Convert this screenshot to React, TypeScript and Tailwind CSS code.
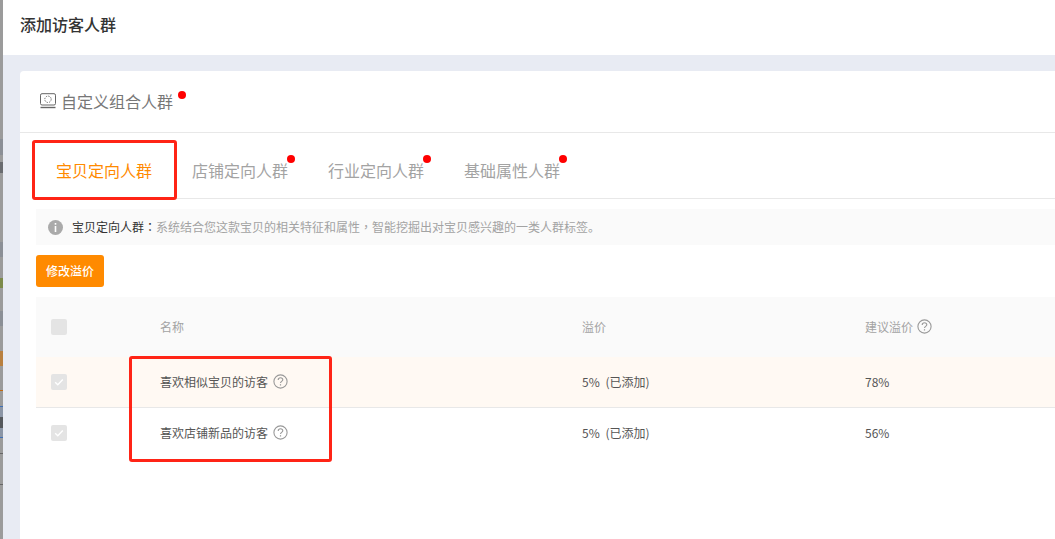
import React from 'react';

const font = { fontFamily: '"Noto Sans CJK SC", "Liberation Sans", sans-serif' };

const HelpIcon: React.FC = () => (
  <svg width="15" height="15" viewBox="0 0 15 15" fill="none" className="shrink-0">
    <circle cx="7.5" cy="7.5" r="6.6" stroke="#999999" strokeWidth="1.1" />
    <path d="M5.2 5.9c0-1.3 1-2.2 2.3-2.2s2.3.9 2.3 2.1c0 1.6-2.3 1.6-2.3 3.3" stroke="#999999" strokeWidth="1.1" />
    <rect x="6.9" y="10.2" width="1.2" height="1.3" fill="#999999" />
  </svg>
);

const Dot: React.FC<{ className: string }> = ({ className }) => (
  <span className={`absolute h-2 w-2 rounded-full bg-[#ff0000] ${className}`} />
);

const Check: React.FC<{ checked?: boolean }> = ({ checked }) => (
  <span className="flex h-4 w-4 items-center justify-center rounded-[2px] bg-[#e4e4e4]">
    {checked && (
      <svg width="12" height="12" viewBox="0 0 12 12" fill="none">
        <path d="M2.2 6.2l2.6 2.6 5-5.4" stroke="#ffffff" strokeWidth="1.4" />
      </svg>
    )}
  </span>
);

const tabs = [
  { label: '宝贝定向人群', active: true },
  { label: '店铺定向人群' },
  { label: '行业定向人群' },
  { label: '基础属性人群' },
];

const rows = [
  { name: '喜欢相似宝贝的访客', advice: '78%', bg: 'bg-[#fff9f3]' },
  { name: '喜欢店铺新品的访客', advice: '56%', bg: 'bg-white' },
];

// strip of the page that shows behind the drawer
const LeftStrip: React.FC = () => (
  <div className="flex w-[3px] shrink-0 flex-col bg-[#9b9b9b]">
    <div className="h-[139px] shrink-0" />
    <div className="h-4 shrink-0 bg-[#8b8f96]" />
    <div className="h-[7px] shrink-0" />
    <div className="h-[11px] shrink-0 bg-[#6a6c70]" />
    <div className="h-[69px] shrink-0" />
    <div className="h-[15px] shrink-0 bg-[#8b8f96]" />
    <div className="h-[21px] shrink-0" />
    <div className="h-[10px] shrink-0 bg-[#7c8a4a]" />
    <div className="h-[23px] shrink-0" />
    <div className="h-[15px] shrink-0 bg-[#8b8f96]" />
    <div className="h-[25px] shrink-0" />
    <div className="h-[15px] shrink-0 bg-[#b9803f]" />
    <div className="h-[24px] shrink-0" />
    <div className="h-px shrink-0 bg-[#c2690f]" />
    <div className="h-[15px] shrink-0" />
    <div className="h-px shrink-0 bg-[#3f6fb5]" />
    <div className="h-[10px] shrink-0 bg-[#8b95a5]" />
    <div className="h-[11px] shrink-0 bg-[#55585c]" />
    <div className="h-[9px] shrink-0 bg-[#8b95a5]" />
    <div className="h-px shrink-0 bg-[#3f6fb5]" />
    <div className="h-[15px] shrink-0" />
    <div className="h-px shrink-0 bg-[#666666]" />
    <div className="h-[30px] shrink-0" />
    <div className="h-px shrink-0 bg-[#666666]" />
  </div>
);

export default function App() {
  return (
    <div className="relative flex h-[539px] w-[1055px] overflow-hidden bg-white" style={font}>
      <LeftStrip />
      <div className="flex min-w-0 flex-1 flex-col">
        <div className="flex h-[55px] shrink-0 items-center pl-[17px] pb-[8px] text-[16px] font-medium text-[#333333]">
          添加访客人群
        </div>
        <div className="flex-1 bg-[#e8ebf3] pt-4 pl-[17px]">
          <div className="h-full w-[1100px] rounded-t-[4px] bg-white">
            <div className="flex h-[62px] items-center gap-[5px] border-b border-[#e8e8e8] pb-px pl-5">
              <svg width="16" height="16" viewBox="0 0 16 16" fill="none">
                <rect x="0.5" y="0.7" width="15" height="11.3" rx="1.5" stroke="#666666" />
                <circle cx="8" cy="6.3" r="3.2" stroke="#666666" strokeDasharray="1.3 1.2" />
                <path d="M0.5 14.5h15" stroke="#666666" strokeWidth="1.4" />
              </svg>
              <span className="relative text-[16px] leading-6 text-[#777777]">
                自定义组合人群
                <Dot className="left-[117px] top-[2px]" />
              </span>
            </div>
            <div className="ml-4 flex h-[66px] items-center border-b border-[#e8e8e8] pt-[8px]">
              {tabs.map((tab) => (
                <div
                  key={tab.label}
                  className={`relative w-[136px] px-5 text-[16px] leading-6 ${tab.active ? 'text-[#ff8a00]' : 'text-[#a3a3a3]'}`}
                >
                  {tab.label}
                  {!tab.active && <Dot className="left-[115px] top-[-3px]" />}
                </div>
              ))}
            </div>
            <div className="ml-4 mt-[10px] flex h-9 items-center bg-[#fafafa] pl-3 text-[12px]">
              <svg width="15" height="15" viewBox="0 0 15 15" className="mr-[9px] shrink-0">
                <circle cx="7.5" cy="7.5" r="7.5" fill="#aaaaaa" />
                <rect x="6.7" y="3" width="1.6" height="1.7" fill="#ffffff" />
                <rect x="6.7" y="6" width="1.6" height="6" fill="#ffffff" />
              </svg>
              <span className="text-[#333333]">
                宝贝定向人群<span className="font-['Noto_Sans_CJK_TC']">：</span>
              </span>
              <span className="text-[#a3a3a3]">
                系统结合您这款宝贝的相关特征和属性<span className="font-['Noto_Sans_CJK_TC']">，</span>智能挖掘出对宝贝感兴趣的一类人群标签。
              </span>
            </div>
            <button className="ml-4 mt-[10px] block h-8 w-[68px] rounded-[3px] bg-[#ff8a00] text-[12px] font-medium text-white">
              修改溢价
            </button>
            <div className="ml-4 mt-[10px] text-[12px]">
              <div className="grid h-[60px] grid-cols-[124px_422px_283px_1fr] items-center bg-[#fafafa] text-[#a3a3a3]">
                <div className="pl-[15px]">
                  <Check />
                </div>
                <div>名称</div>
                <div>溢价</div>
                <div className="flex items-center gap-1">
                  建议溢价
                  <span className="-mt-[2px]">
                    <HelpIcon />
                  </span>
                </div>
              </div>
              {rows.map((row) => (
                <div
                  key={row.name}
                  className={`grid h-[51px] grid-cols-[124px_422px_283px_1fr] items-center border-b border-[#e8e8e8] text-[#555555] last:border-b-transparent ${row.bg}`}
                >
                  <div className="pl-[15px]">
                    <Check checked />
                  </div>
                  <div className="flex items-center gap-[5px]">
                    {row.name}
                    <span className="-mt-[2px]">
                      <HelpIcon />
                    </span>
                  </div>
                  <div>
                    5%<span className="ml-[3px]"> (已添加)</span>
                  </div>
                  <div>{row.advice}</div>
                </div>
              ))}
            </div>
          </div>
        </div>
      </div>
      {/* red annotation boxes drawn over the screenshot */}
      <div className="absolute left-[32px] top-[140px] h-[60px] w-[145px] rounded-[3px] border-[3px] border-[#ff2416]" />
      <div className="absolute left-[129px] top-[356px] h-[106px] w-[203px] rounded-[3px] border-[3px] border-[#ff2416]" />
    </div>
  );
}
